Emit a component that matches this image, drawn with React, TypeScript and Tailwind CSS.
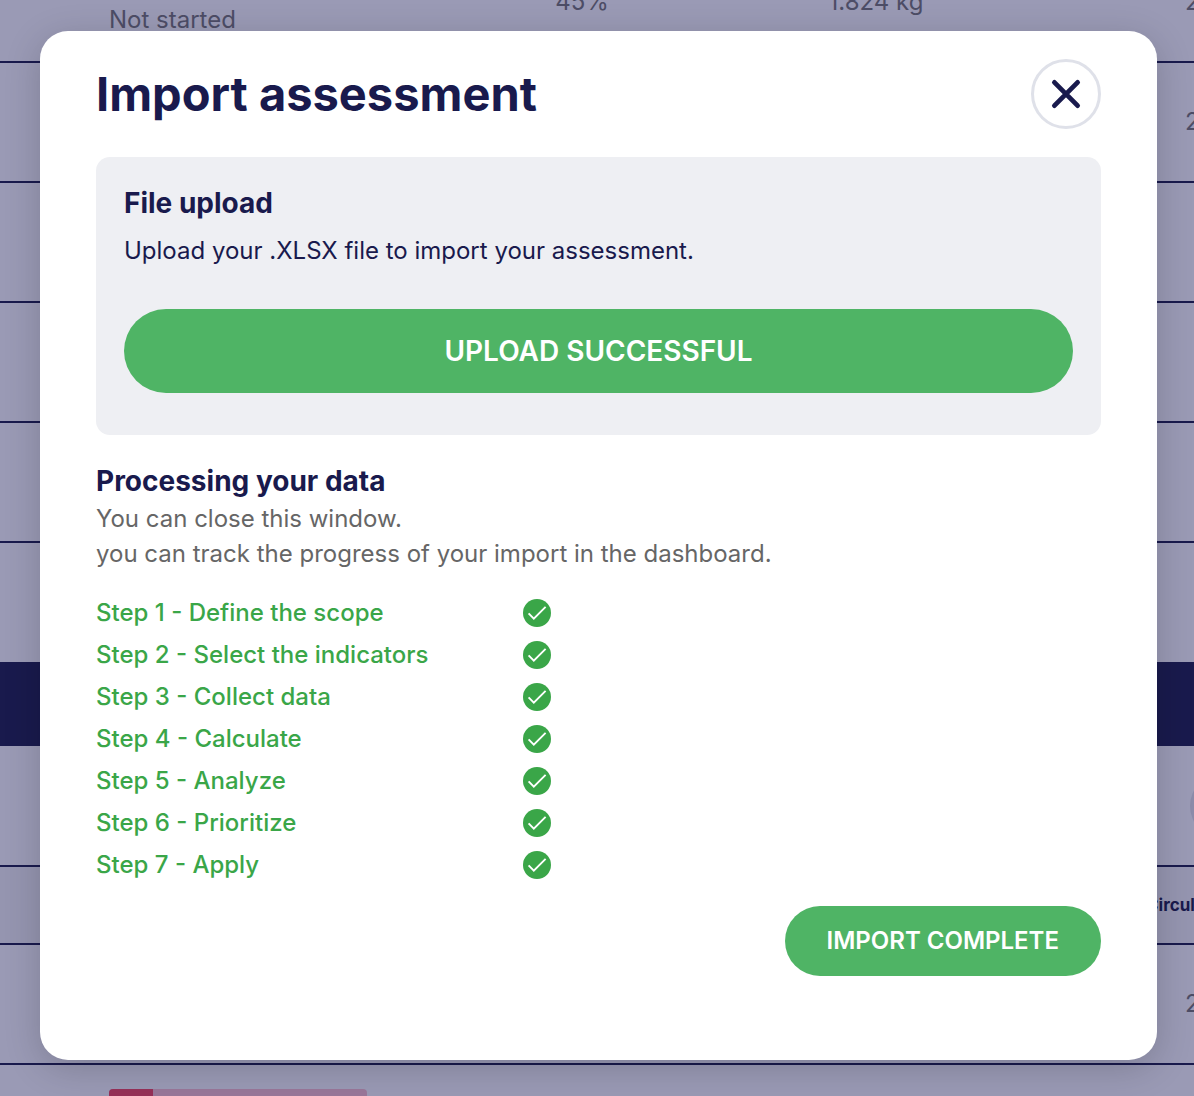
import { useState } from "react";

const STEPS = [
  "Define the scope",
  "Select the indicators",
  "Collect data",
  "Calculate",
  "Analyze",
  "Prioritize",
  "Apply",
];

function CheckIcon() {
  return (
    <svg viewBox="0 0 28 28" className="h-7 w-7" fill="none" aria-hidden="true">
      <circle cx="14" cy="14" r="14" fill="#3aa648" />
      <path d="M5.6 14.4L10.8 19.6L22.6 7.8" stroke="white" strokeWidth="1.9" />
    </svg>
  );
}

function CloseIcon() {
  return (
    <svg viewBox="0 0 30 30" className="h-[30px] w-[30px]" fill="none" aria-hidden="true">
      <path d="M3.4 3.4L26.6 26.6M26.6 3.4L3.4 26.6" stroke="#191a4d" strokeWidth="4.8" strokeLinecap="round" />
    </svg>
  );
}

function AssessmentTable() {
  return (
    <table className="-mt-[58px] w-full min-w-[1400px] table-fixed border-collapse text-2xl text-[#4d4d66]">
      <colgroup>
        <col className="w-[109px]" />
        <col className="w-[326px]" />
        <col className="w-[294px]" />
        <col className="w-[294px]" />
        <col className="w-[123px]" />
        <col />
      </colgroup>
      <tbody>
        <tr className="h-[120px] border-b-2 border-[#191a4d]">
          <td />
          <td className="pt-9">Not started</td>
          <td className="text-center">45%</td>
          <td className="text-center">1.824 kg</td>
          <td />
          <td className="pl-[39px]">2</td>
        </tr>
        <tr className="h-[120px] border-b-2 border-[#191a4d]">
          <td colSpan={5} />
          <td className="pl-[39px]">2</td>
        </tr>
        <tr className="h-[120px] border-b-2 border-[#191a4d]">
          <td colSpan={6} />
        </tr>
        <tr className="h-[120px] border-b-2 border-[#191a4d]">
          <td colSpan={6} />
        </tr>
        <tr className="h-[120px] border-b-2 border-[#191a4d]">
          <td colSpan={6} />
        </tr>
        <tr className="h-[120px]">
          <td colSpan={6} />
        </tr>
        <tr className="h-[84px] bg-[#191a4d]">
          <td colSpan={6} />
        </tr>
        <tr className="h-[120px] border-b-2 border-[#191a4d]">
          <td colSpan={5} />
          <td className="pl-11">
            <div className="h-16 w-16 rounded-full bg-[#8b8ba9]" />
          </td>
        </tr>
        <tr className="h-[78px] border-b-2 border-[#191a4d] bg-[#9595b0]">
          <td colSpan={5} />
          <td className="text-[17px] leading-6 font-bold text-[#191a4d]">Circul</td>
        </tr>
        <tr className="h-[120px] border-b-2 border-[#191a4d]">
          <td colSpan={5} />
          <td className="pl-[39px]">2</td>
        </tr>
        <tr className="h-[120px]">
          <td />
          <td className="pt-6 align-top">
            <div className="h-3.5 w-[258px] overflow-hidden rounded bg-[#997799]">
              <div className="h-full w-11 bg-[#963058]" />
            </div>
          </td>
          <td colSpan={4} />
        </tr>
      </tbody>
    </table>
  );
}

function ImportDialog({ onClose }: { onClose: () => void }) {
  return (
    <div
      role="dialog"
      aria-modal="true"
      aria-labelledby="import-title"
      className="w-full rounded-[28px] bg-white px-14 pt-7 pb-[84px] text-[#191a4d] shadow-[0_8px_36px_rgba(0,0,0,0.18)]"
    >
      <header className="flex items-center justify-between">
        <h1 id="import-title" className="text-[47px] leading-[70px] font-bold">
          Import assessment
        </h1>
        <button
          type="button"
          aria-label="Close"
          onClick={onClose}
          className="flex h-[70px] w-[70px] items-center justify-center rounded-full border-[3px] border-[#dfe1e9]"
        >
          <CloseIcon />
        </button>
      </header>

      <section className="mt-7 rounded-[14px] bg-[#eeeff3] px-7 pt-7 pb-[42px]">
        <h2 className="text-[28px] leading-9 font-bold">File upload</h2>
        <p className="mt-3 text-2xl leading-9">Upload your .XLSX file to import your assessment.</p>
        <button
          type="button"
          className="mt-10 h-[84px] w-full rounded-full bg-[#4fb465] text-[28px] font-semibold text-white"
        >
          UPLOAD SUCCESSFUL
        </button>
      </section>

      <section className="mt-7">
        <h2 className="text-[28px] leading-9 font-bold">Processing your data</h2>
        <p className="mt-0.5 text-2xl leading-[35px] text-[#666666]">
          You can close this window.
          <br />
          you can track the progress of your import in the dashboard.
        </p>
        <ul className="mt-[21px] text-2xl leading-[42px] font-medium text-[#3aa648]">
          {STEPS.map((step, i) => (
            <li key={step} className="flex h-[42px] items-center">
              <span className="w-[427px]">
                Step {i + 1} - {step}
              </span>
              <CheckIcon />
            </li>
          ))}
        </ul>
      </section>

      <footer className="mt-5 flex justify-end">
        <button
          type="button"
          onClick={onClose}
          className="h-[70px] rounded-full bg-[#4fb465] px-[42px] text-2xl font-semibold text-white"
        >
          IMPORT COMPLETE
        </button>
      </footer>
    </div>
  );
}

export default function App() {
  const [open, setOpen] = useState(true);

  return (
    <div className="relative h-screen overflow-hidden bg-[#9a9ab5] font-['Inter',sans-serif]">
      <AssessmentTable />
      {open && (
        <div className="absolute inset-0 flex items-start pt-[31px] pr-[37px] pl-10">
          <ImportDialog onClose={() => setOpen(false)} />
        </div>
      )}
    </div>
  );
}
